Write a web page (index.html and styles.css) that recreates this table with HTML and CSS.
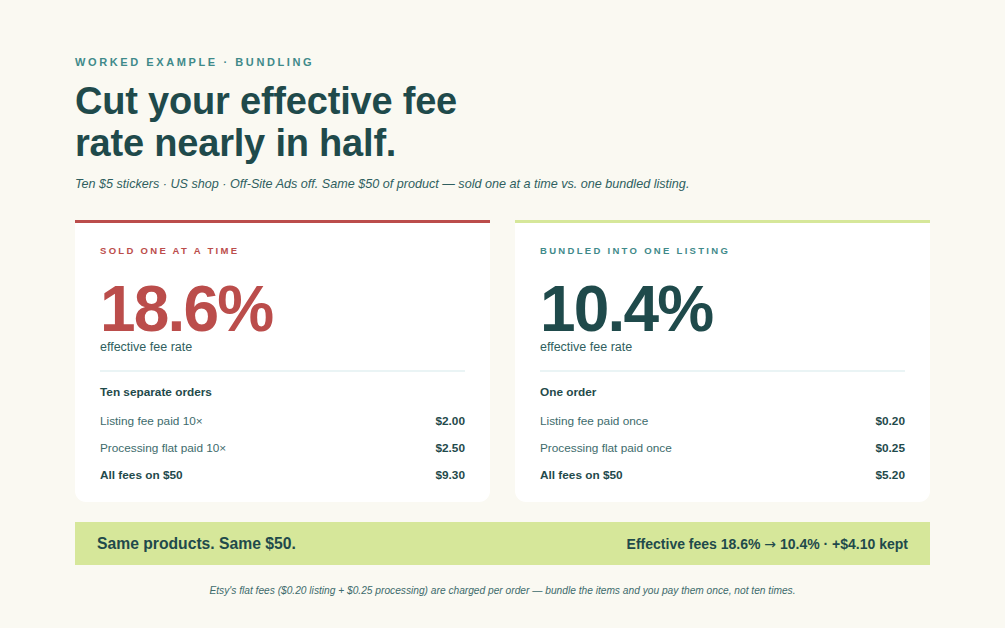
FILE: index.html
```html
<!DOCTYPE html>
<html lang="en">
<head>
<meta charset="utf-8">
<title>Bundling worked example</title>
<link rel="stylesheet" href="styles.css">
</head>
<body>
<main class="page">
  <div class="eyebrow">WORKED EXAMPLE · BUNDLING</div>
  <h1 class="title">Cut your effective fee<br>rate nearly in half.</h1>
  <p class="subtitle">Ten $5 stickers · US shop · Off-Site Ads off. Same $50 of product — sold one at a time vs. one bundled listing.</p>

  <section class="cards">
    <article class="card card-single">
      <div class="card-label">SOLD ONE AT A TIME</div>
      <div class="big">18.6%</div>
      <div class="caption">effective fee rate</div>
      <div class="divider"></div>
      <div class="section-title">Ten separate orders</div>
      <div class="row"><span>Listing fee paid 10×</span><span class="val">$2.00</span></div>
      <div class="row"><span>Processing flat paid 10×</span><span class="val">$2.50</span></div>
      <div class="row total"><span>All fees on $50</span><span class="val">$9.30</span></div>
    </article>
    <article class="card card-bundle">
      <div class="card-label">BUNDLED INTO ONE LISTING</div>
      <div class="big">10.4%</div>
      <div class="caption">effective fee rate</div>
      <div class="divider"></div>
      <div class="section-title">One order</div>
      <div class="row"><span>Listing fee paid once</span><span class="val">$0.20</span></div>
      <div class="row"><span>Processing flat paid once</span><span class="val">$0.25</span></div>
      <div class="row total"><span>All fees on $50</span><span class="val">$5.20</span></div>
    </article>
  </section>

  <div class="banner">
    <span class="banner-left">Same products. Same $50.</span>
    <span class="banner-right">Effective fees 18.6% <span class="arrow">→</span> 10.4% · +$4.10 kept</span>
  </div>

  <p class="footnote">Etsy's flat fees ($0.20 listing + $0.25 processing) are charged per order — bundle the items and you pay them once, not ten times.</p>
</main>
</body>
</html>
```

FILE: styles.css
```css
* { box-sizing: border-box; }
html, body {
  margin: 0;
  padding: 0;
  background: #faf9f2;
}
body {
  font-family: "Liberation Sans", Arial, sans-serif;
  color: #1f4a4b;
}
.page {
  width: 855px;
  margin: 0 0 0 75px;
  padding-top: 55px;
}
.eyebrow {
  font-size: 11px;
  line-height: 14px;
  font-weight: 700;
  letter-spacing: 2.6px;
  color: #3f8a8a;
}
.title {
  margin: 11px 0 0;
  font-size: 38px;
  line-height: 42px;
  letter-spacing: -0.2px;
  font-weight: 700;
  color: #1f4a4b;
}
.subtitle {
  margin: 11px 0 0;
  font-size: 12.6px;
  line-height: 18px;
  font-style: italic;
  color: #2f5f60;
}
.cards {
  margin-top: 27px;
  display: grid;
  grid-template-columns: 415px 415px;
  column-gap: 25px;
}
.card {
  background: #ffffff;
  border-top: 3px solid #bb4d4b;
  border-radius: 0 0 11px 11px;
  padding: 21px 25px 13px;
}
.card-bundle { border-top-color: #d6e79a; }
.card-label {
  font-size: 9.5px;
  line-height: 14px;
  font-weight: 700;
  letter-spacing: 2.3px;
  color: #bb4d4b;
}
.card-bundle .card-label { color: #3f8a8a; }
.big {
  margin-top: 26px;
  font-size: 64px;
  line-height: 50px;
  letter-spacing: -1.8px;
  font-weight: 700;
  color: #bb4d4b;
}
.card-bundle .big { color: #1f4a4b; }
.caption {
  margin-top: 6px;
  font-size: 12.5px;
  line-height: 15px;
  color: #2f5f60;
}
.divider {
  margin-top: 15px;
  height: 2px;
  background: #eaf4f5;
}
.section-title {
  margin-top: 12px;
  font-size: 11.8px;
  line-height: 16px;
  font-weight: 700;
  color: #1f4a4b;
}
.section-title + .row { margin-top: 8px; }
.row {
  display: flex;
  justify-content: space-between;
  font-size: 11.8px;
  line-height: 27px;
  color: #3d6b6c;
}
.row .val {
  font-weight: 700;
  color: #1f4a4b;
}
.row.total span:first-child {
  font-weight: 700;
  color: #1f4a4b;
}
.banner {
  margin-top: 20px;
  height: 43px;
  background: #d6e79a;
  display: flex;
  align-items: center;
  justify-content: space-between;
  padding: 0 22px;
  color: #1f4a4b;
  font-weight: 700;
}
.banner-left { font-size: 15.7px; }
.banner-right { font-size: 14px; }
.arrow {
  font-family: "DejaVu Sans", sans-serif;
  font-weight: 400;
}
.footnote {
  margin: 19px 0 0;
  text-align: center;
  font-size: 10.2px;
  line-height: 14px;
  font-style: italic;
  color: #3d6b6c;
}
```
